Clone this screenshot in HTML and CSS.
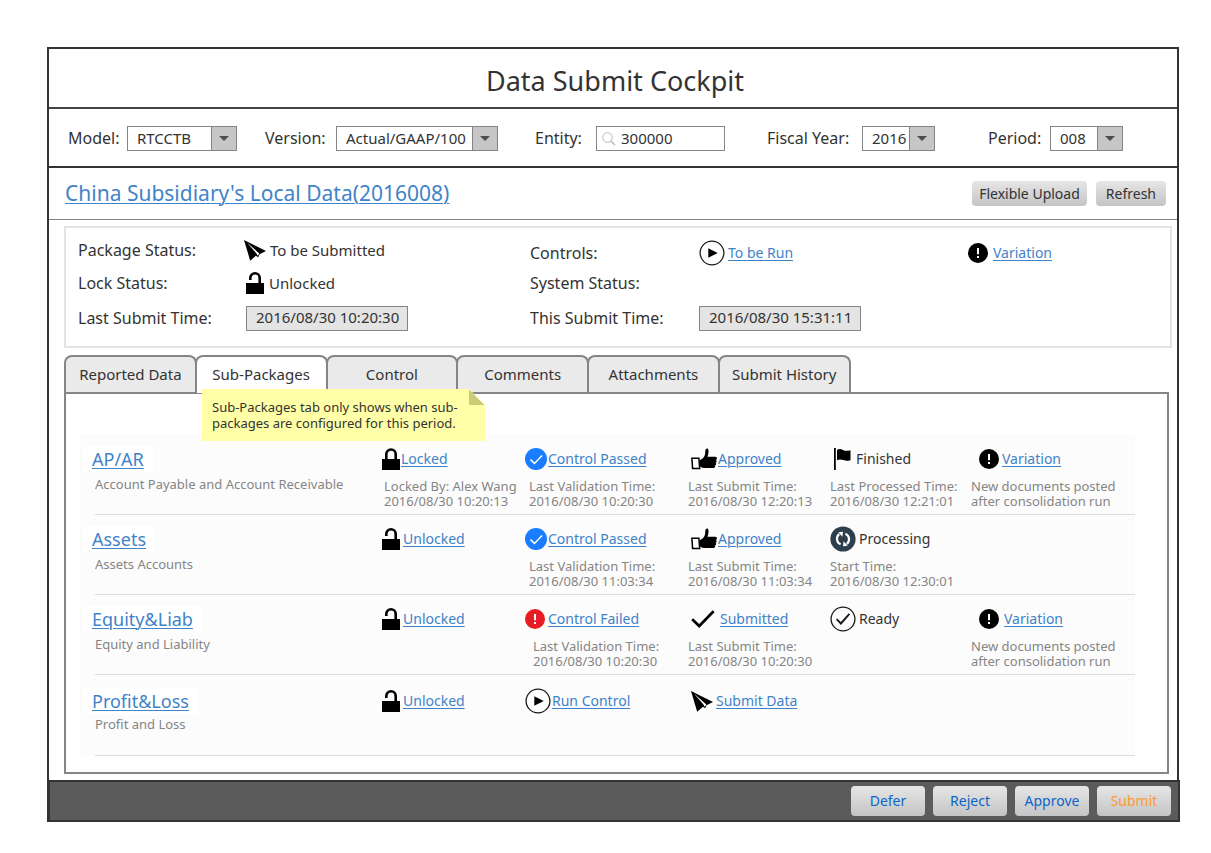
FILE: index.html
```html
<!DOCTYPE html>
<html lang="en">
<head>
<meta charset="utf-8">
<title>Data Submit Cockpit</title>
<link rel="stylesheet" href="styles.css">
</head>
<body>
<svg class="sprite" aria-hidden="true">
  <symbol id="caret" viewBox="0 0 10 5"><path d="M0 0h10L5 5z" fill="#4d4d4d"/></symbol>
  <symbol id="search" viewBox="0 0 14 14"><circle cx="5.5" cy="5.5" r="4.8" fill="none" stroke="#b9b9b9"/><path d="M9 9l4 4" stroke="#b9b9b9" stroke-width="1.4"/></symbol>
  <symbol id="locked" viewBox="0 0 18 22"><path d="M0 11h18v11H0z"/><path d="M4.3 12V6.2a4.7 4.7 0 0 1 9.4 0V12" fill="none" stroke="#000" stroke-width="2.6"/></symbol>
  <symbol id="unlocked" viewBox="0 0 18 22"><path d="M0 11h18v11H0z"/><path d="M4.3 8V6a4.7 4.7 0 0 1 9.4 0V12" fill="none" stroke="#000" stroke-width="2.6"/></symbol>
  <symbol id="plane" viewBox="0 0 22 21"><path d="M0 0l22 11-6.500 3.300-1.300 3-2.300-1.600-5.700 5z"/><path d="M3 2.500l10.800 13.300 1.500-2.300z" fill="#fff"/><path d="M4.500 4.600l8.300 9.400.2 1.600z"/></symbol>
  <symbol id="play" viewBox="0 0 26 26"><circle cx="13" cy="13" r="11.9" fill="#fff" stroke="#1a1a1a" stroke-width="1.3"/><path d="M9.3 8.200l9.400 4.800-9.400 4.800z"/></symbol>
  <symbol id="alert" viewBox="0 0 20 20"><circle cx="10" cy="10" r="10"/><path d="M9 5h2v6.300H9zM9 13h2v2H9z" fill="#fff"/></symbol>
  <symbol id="failed" viewBox="0 0 20 20"><circle cx="10" cy="10" r="10" fill="#e81c24"/><path d="M9 5h2v6.300H9zM9 13h2v2H9z" fill="#fff"/></symbol>
  <symbol id="passed" viewBox="0 0 22 22"><circle cx="11" cy="11" r="11" fill="#1a7dff"/><path d="M5.500 11.600l4 3.800 7.600-8" fill="none" stroke="#fff" stroke-width="1.500"/></symbol>
  <symbol id="thumb" viewBox="0 0 26 22"><path d="M.9 10.2h7l.8 10.200H1.600z" fill="#fff" stroke="#000" stroke-width="1.500"/><path d="M8.600 12.200c3.400-1.400 5.300-3.600 5.600-6.600 0-2 .1-3.600.6-4.300.7-1.200 2.200-1 2.600.6.500 2.200-.3 4.600-.9 6.900h7.600c2.400 0 2.300 2.900.5 3.100 1.600.4 1.300 2.800-.2 2.900 1.200.6.900 2.600-.6 2.800.8.900.3 2.400-1.200 2.400h-8.200c-2.300 0-3.500-.4-5.200-1.300z"/></symbol>
  <symbol id="flag" viewBox="0 0 17 22"><path d="M0 0h1.800v22H0z"/><path d="M3 2c2-1.400 4-1 6 0s4.500 1.200 7.500.2v10c-3 1-5 .8-7.200-.1S5 11 3 12.300z"/></symbol>
  <symbol id="sync" viewBox="0 0 26 26"><circle cx="13" cy="13" r="12.600" fill="#2f3e4d"/><path d="M10.600 18.300a6 6 0 0 1-1.400-10.200M15.400 7.700a6 6 0 0 1 1.400 10.200" fill="none" stroke="#fff" stroke-width="2.200"/><path d="M8.300 6.200l4.700-.4-.6 5zM17.700 19.800l-4.700.4.600-5z" fill="#fff"/></symbol>
  <symbol id="check" viewBox="0 0 24 18"><path d="M1.200 9.300l7 6.700L22.600 1.300" fill="none" stroke="#000" stroke-width="2.700"/></symbol>
  <symbol id="ready" viewBox="0 0 26 26"><circle cx="13" cy="13" r="11.900" fill="none" stroke="#1a1a1a" stroke-width="1.300"/><path d="M6.600 13.200l4.300 4.300 8.500-9.700" fill="none" stroke="#1a1a1a" stroke-width="1.900"/></symbol>
</svg>

<main class="cockpit">
  <h1 class="title">Data Submit Cockpit</h1>

  <form class="filters">
    <label for="model">Model:</label>
    <span class="select select--medium"><select id="model"><option>RTCCTB</option></select><svg class="select-arrow"><use href="#caret"/></svg></span>
    <label for="version">Version:</label>
    <span class="select select--large"><select id="version"><option>Actual/GAAP/100</option></select><svg class="select-arrow"><use href="#caret"/></svg></span>
    <label for="entity">Entity:</label>
    <span class="search"><svg class="search-icon"><use href="#search"/></svg><input id="entity" type="text" value="300000"></span>
    <label for="year">Fiscal Year:</label>
    <span class="select select--small"><select id="year"><option>2016</option></select><svg class="select-arrow"><use href="#caret"/></svg></span>
    <label for="period">Period:</label>
    <span class="select select--small"><select id="period"><option>008</option></select><svg class="select-arrow"><use href="#caret"/></svg></span>
  </form>

  <header class="heading">
    <h2><a href="#package">China Subsidiary's Local Data(2016008)</a></h2>
    <div class="heading-actions">
      <button type="button" class="button">Flexible Upload</button>
      <button type="button" class="button">Refresh</button>
    </div>
  </header>

  <section class="summary" id="package">
    <span>Package Status:</span>
    <span class="state state--large"><svg class="i-plane"><use href="#plane"/></svg>To be Submitted</span>
    <span class="summary-low">Controls:</span>
    <span class="state summary-low"><svg class="i-ring"><use href="#play"/></svg><a href="#control">To be Run</a></span>
    <span class="state state--spaced summary-low"><svg class="i-dot"><use href="#alert"/></svg><a href="#variation">Variation</a></span>

    <span>Lock Status:</span>
    <span class="state state--large state--lock"><svg class="i-lock"><use href="#unlocked"/></svg>Unlocked</span>
    <span class="summary-rest">System Status:</span>

    <label for="last">Last Submit Time:</label>
    <input class="stamp" id="last" type="text" value="2016/08/30 10:20:30" readonly>
    <label for="this">This Submit Time:</label>
    <input class="stamp" id="this" type="text" value="2016/08/30 15:31:11" readonly>
  </section>

  <section class="tabset">
    <div class="tabs" role="tablist">
      <button type="button" class="tab" role="tab">Reported Data</button>
      <button type="button" class="tab tab--active" role="tab" aria-selected="true">Sub-Packages</button>
      <button type="button" class="tab" role="tab">Control</button>
      <button type="button" class="tab" role="tab">Comments</button>
      <button type="button" class="tab" role="tab">Attachments</button>
      <button type="button" class="tab" role="tab">Submit History</button>
    </div>
    <p class="note">Sub-Packages tab only shows when sub-packages are configured for this period.</p>

    <div class="panel" role="tabpanel">
      <div class="packages-wrap">
        <table class="packages">
          <colgroup><col><col class="c-lock"><col class="c-control"><col class="c-submit"><col class="c-process"><col class="c-variation"></colgroup>
          <tbody>
            <tr>
              <th scope="row"><a class="name" href="#ap-ar">AP/AR</a><p class="about">Account Payable and Account Receivable</p></th>
              <td class="lock"><div class="state state--tight"><svg class="i-lock"><use href="#locked"/></svg><a href="#lock">Locked</a></div><p class="meta">Locked By: Alex Wang<br>2016/08/30 10:20:13</p></td>
              <td class="control"><div class="state state--tight"><svg class="i-badge"><use href="#passed"/></svg><a href="#control">Control Passed</a></div><p class="meta">Last Validation Time:<br>2016/08/30 10:20:30</p></td>
              <td class="submit"><div class="state state--tight"><svg class="i-thumb"><use href="#thumb"/></svg><a href="#submit">Approved</a></div><p class="meta">Last Submit Time:<br>2016/08/30 12:20:13</p></td>
              <td class="process"><div class="state state--spaced"><svg class="i-flag"><use href="#flag"/></svg>Finished</div><p class="meta">Last Processed Time:<br>2016/08/30 12:21:01</p></td>
              <td class="variation"><div class="state"><svg class="i-dot"><use href="#alert"/></svg><a href="#variation">Variation</a></div><p class="meta">New documents posted<br>after consolidation run</p></td>
            </tr>
            <tr>
              <th scope="row"><a class="name" href="#assets">Assets</a><p class="about">Assets Accounts</p></th>
              <td class="lock"><div class="state"><svg class="i-lock"><use href="#unlocked"/></svg><a href="#lock">Unlocked</a></div></td>
              <td class="control"><div class="state state--tight"><svg class="i-badge"><use href="#passed"/></svg><a href="#control">Control Passed</a></div><p class="meta">Last Validation Time:<br>2016/08/30 11:03:34</p></td>
              <td class="submit"><div class="state state--tight"><svg class="i-thumb"><use href="#thumb"/></svg><a href="#submit">Approved</a></div><p class="meta">Last Submit Time:<br>2016/08/30 11:03:34</p></td>
              <td class="process"><div class="state"><svg class="i-ring"><use href="#sync"/></svg>Processing</div><p class="meta">Start Time:<br>2016/08/30 12:30:01</p></td>
              <td></td>
            </tr>
            <tr>
              <th scope="row"><a class="name" href="#equity">Equity&amp;Liab</a><p class="about">Equity and Liability</p></th>
              <td class="lock"><div class="state"><svg class="i-lock"><use href="#unlocked"/></svg><a href="#lock">Unlocked</a></div></td>
              <td class="control"><div class="state"><svg class="i-dot"><use href="#failed"/></svg><a href="#control">Control Failed</a></div><p class="meta meta--inset">Last Validation Time:<br>2016/08/30 10:20:30</p></td>
              <td class="submit"><div class="state state--spaced"><svg class="i-check"><use href="#check"/></svg><a href="#submit">Submitted</a></div><p class="meta">Last Submit Time:<br>2016/08/30 10:20:30</p></td>
              <td class="process"><div class="state"><svg class="i-ring"><use href="#ready"/></svg>Ready</div></td>
              <td class="variation"><div class="state state--spaced"><svg class="i-dot"><use href="#alert"/></svg><a href="#variation">Variation</a></div><p class="meta">New documents posted<br>after consolidation run</p></td>
            </tr>
            <tr class="open">
              <th scope="row"><a class="name" href="#profit">Profit&amp;Loss</a><p class="about">Profit and Loss</p></th>
              <td class="lock"><div class="state"><svg class="i-lock"><use href="#unlocked"/></svg><a href="#lock">Unlocked</a></div></td>
              <td class="control"><div class="state state--tight"><svg class="i-ring"><use href="#play"/></svg><a href="#control">Run Control</a></div></td>
              <td class="submit"><div class="state"><svg class="i-plane"><use href="#plane"/></svg><a href="#submit">Submit Data</a></div></td>
              <td></td>
              <td></td>
            </tr>
          </tbody>
        </table>
      </div>
    </div>
  </section>

  <footer class="actions">
    <button type="button" class="button button--action">Defer</button>
    <button type="button" class="button button--action">Reject</button>
    <button type="button" class="button button--action">Approve</button>
    <button type="button" class="button button--action button--submit">Submit</button>
  </footer>
</main>
</body>
</html>
```

FILE: styles.css
```css
* {
  box-sizing: border-box;
}

body {
  margin: 0;
  padding: 47px 32px 31px 47px;
  background: #fff;
  color: #333;
  font-family: "Noto Sans", "Open Sans", sans-serif;
  font-size: 16px;
  line-height: 20px;
}

button,
input,
select {
  font: inherit;
  color: inherit;
}

a {
  color: #3f83c9;
  text-decoration: underline;
  text-decoration-thickness: 1px;
  text-underline-offset: 2px;
}

h1,
h2,
p {
  margin: 0;
  font-weight: 400;
}

.sprite {
  display: none;
}

.cockpit {
  border: 2px solid #333;
  border-bottom: 0;
}

.title {
  padding: 14px 0 8px 4px;
  border-bottom: 2px solid #444;
  font-size: 27px;
  line-height: 36px;
  text-align: center;
}

/* Filter bar: label and field columns in turn */
.filters {
  display: grid;
  grid-template-columns: 59fr 138fr 71fr 199fr 61fr 171fr 95fr 126fr 62fr 127fr;
  align-items: center;
  padding: 17px 0 15px 19px;
  border-bottom: 2px solid #333;
  white-space: nowrap;
}

.filters label {
  padding-bottom: 2px;
}

.select,
.search {
  position: relative;
  display: flex;
  height: 25px;
  border: 1px solid #858585;
  background: #fff;
  font-size: 15px;
}

.select--small {
  width: 73px;
}

.select--medium {
  width: 110px;
}

.select--large {
  width: 162px;
}

.select select {
  width: 100%;
  padding: 0 0 2px 9px;
  border: 0;
  background: none;
  appearance: none;
}

.select-arrow {
  position: absolute;
  top: 0;
  right: 0;
  width: 25px;
  height: 23px;
  padding: 9px 7px;
  border-left: 1px solid #858585;
  background: #c6c6c6;
  pointer-events: none;
}

.search {
  align-items: center;
  gap: 5px;
  width: 129px;
  padding-left: 5px;
}

.search-icon {
  flex: none;
  width: 14px;
  height: 14px;
}

.search input {
  min-width: 0;
  width: 100%;
  padding: 0 0 2px;
  border: 0;
  background: none;
}

/* Package heading */
.heading {
  display: flex;
  align-items: center;
  justify-content: space-between;
  padding: 12px 11px 12px 16px;
  border-bottom: 1px solid #858585;
}

.heading h2 {
  font-size: 21px;
  line-height: 27px;
}

.heading-actions {
  display: flex;
  gap: 9px;
}

.button {
  height: 25px;
  padding: 0 7px;
  border: 0;
  border-radius: 4px;
  background: linear-gradient(#e6e6e6, #c4c4c4);
  font-size: 14px;
}

.heading .button + .button {
  padding: 0 10px;
}

/* Package summary */
.summary {
  display: grid;
  grid-template-columns: 168fr 284fr 169fr 269fr 202fr;
  grid-template-rows: 34px 32px 38px;
  align-items: center;
  margin: 6px 5px 0 15px;
  padding: 5px 0 9px 12px;
  border: 2px solid #e4e4e4;
}

.summary-low {
  padding-top: 6px;
}

.summary-rest {
  grid-column: 3 / 6;
}

.stamp {
  width: 162px;
  height: 25px;
  padding: 0 4px 2px 9px;
  border: 1px solid #858585;
  background: #e4e4e4;
  font-size: 15px;
}

/* Icon and text of a status */
.state {
  display: flex;
  align-items: center;
  gap: 3px;
  min-height: 26px;
  font-size: 14px;
  white-space: nowrap;
}

.state svg {
  flex: none;
}

.state--tight {
  gap: 1px;
}

.state--spaced {
  gap: 5px;
}

.state--large {
  font-size: 15px;
}

.summary .state--large {
  gap: 4px;
  margin-left: -2px;
}

.summary .state--lock {
  gap: 5px;
  margin-left: 0;
}

.i-plane {
  width: 22px;
  height: 21px;
}

.i-lock {
  width: 18px;
  height: 22px;
}

.i-ring {
  width: 26px;
  height: 26px;
}

.i-dot {
  width: 20px;
  height: 20px;
}

.i-badge {
  width: 22px;
  height: 22px;
}

.i-thumb {
  width: 26px;
  height: 22px;
}

.i-flag {
  width: 17px;
  height: 22px;
  margin-left: 4px;
}

.i-check {
  width: 24px;
  height: 18px;
}

/* Tabs */
.tabset {
  position: relative;
  margin: 7px 8px 6px 15px;
}

.tabs {
  display: grid;
  grid-template-columns: repeat(6, 1fr);
  width: 71%;
}

.tab {
  height: 37px;
  margin-right: -2px;
  padding: 0 0 2px;
  border: 2px solid #858585;
  border-bottom: 0;
  border-radius: 8px 8px 0 0;
  background: #eaeaea;
  font-size: 15px;
  white-space: nowrap;
}

.tab--active {
  height: 38px;
  margin-bottom: -1px;
  padding-bottom: 3px;
  background: #fff;
  z-index: 1;
}

.note {
  position: absolute;
  top: 34px;
  left: 138px;
  z-index: 2;
  width: 283px;
  padding: 10px;
  background: linear-gradient(45deg, #cccc77 50%, transparent 50%) right top / 16px 16px no-repeat, #ffffa8;
  clip-path: polygon(0 0, 267px 0, 100% 16px, 100% 100%, 0 100%);
  font-size: 13px;
  line-height: 16px;
}

.panel {
  padding: 40px 32px 16px 14px;
  border: 2px solid #858585;
}

.packages-wrap {
  padding: 1px 0 0 15px;
  background: #fcfcfc;
}

.packages {
  width: 100%;
  table-layout: fixed;
  border-collapse: separate;
  border-spacing: 0;
}

.c-lock {
  width: 143px;
}

.c-control {
  width: 163px;
}

.c-submit {
  width: 142px;
}

.c-process {
  width: 141px;
}

.c-variation {
  width: 164px;
}

.packages th,
.packages td {
  height: 80px;
  padding: 11px 0 0;
  border-bottom: 1px solid #dcdcdc;
  text-align: left;
  vertical-align: top;
  font-weight: 400;
}

.packages .open th,
.packages .open td {
  height: 81px;
  padding-top: 13px;
}

.submit .state {
  padding-left: 3px;
}

.variation .state {
  padding-left: 8px;
}

.name {
  display: inline-block;
  margin-left: -12px;
  padding: 0 9px;
  background: #fff;
  font-size: 18px;
  line-height: 26px;
}

.about,
.meta {
  color: #858585;
  font-size: 13px;
  line-height: 15px;
  white-space: nowrap;
}

.about {
  margin-top: 5px;
}

.open .about {
  margin-top: 3px;
}

.meta {
  margin-top: 7px;
}

.lock .meta {
  padding-left: 2px;
}

.control .meta {
  padding-left: 4px;
}

.control .meta--inset {
  padding-left: 8px;
}

/* Footer */
.actions {
  display: flex;
  justify-content: flex-end;
  gap: 8px;
  margin: 0 -3px 0 -1px;
  padding: 4px 7px;
  border: 2px solid #333;
  background: #5b5b5b;
}

.button--action {
  width: 74px;
  height: 30px;
  color: #0a66cc;
}

.button--submit {
  color: #ff9933;
}
```
